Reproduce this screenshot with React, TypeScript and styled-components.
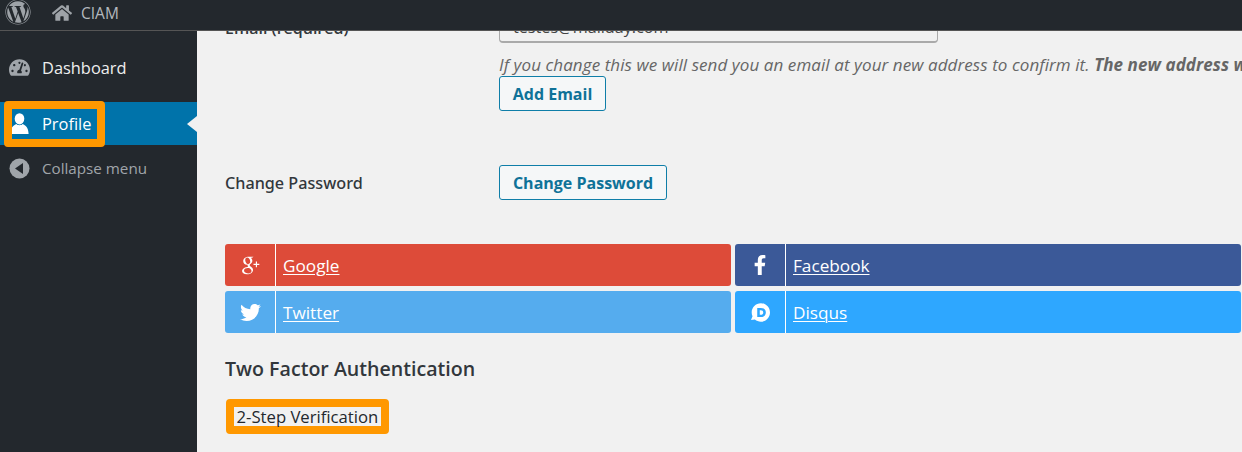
import * as React from 'react';
import styled, { createGlobalStyle } from 'styled-components';
import { FaFacebookF, FaHome, FaTachometerAlt, FaTwitter, FaWordpress } from 'react-icons/fa';
import { TiSocialGooglePlus } from 'react-icons/ti';
import { SiDisqus } from 'react-icons/si';

const GlobalStyle = createGlobalStyle`
  html, body {
    margin: 0;
    padding: 0;
    width: 1242px;
    height: 452px;
    overflow: hidden;
    background: #f1f1f1;
    font-family: "Open Sans", "Noto Sans", "Liberation Sans", sans-serif;
  }
`;

const Page = styled.div`
  position: relative;
  display: grid;
  grid-template-columns: 197px 1fr;
  width: 1242px;
  height: 452px;
  overflow: hidden;
`;

const TopBar = styled.div`
  position: absolute;
  top: 0;
  left: 0;
  right: 0;
  height: 31px;
  background: #23282d;
  border-bottom: 1px solid #555;
  box-sizing: border-box;
  display: flex;
  align-items: flex-start;
  color: #a0a5aa;
  z-index: 2;
`;

const LogoSlot = styled.span`
  display: flex;
  font-size: 26px;
  margin: -1px 0 0 5px;
  color: #9ea3a8;
`;

const HomeSlot = styled.span`
  display: flex;
  font-size: 20px;
  margin: 3px 0 0 21px;
  color: #9ea3a8;
`;

const SiteName = styled.span`
  font-size: 15.5px;
  line-height: 27px;
  margin-left: 9px;
  color: #b4b9be;
`;

const Sidebar = styled.nav`
  background: #23282d;
  padding-top: 46px;
  display: flex;
  flex-direction: column;
`;

const MenuItem = styled.div<{ $active?: boolean }>`
  position: relative;
  display: flex;
  align-items: center;
  height: 43px;
  padding-left: 9px;
  gap: 12px;
  font-size: 16.4px;
  color: ${(p) => (p.$active ? '#fff' : '#eee')};
  background: ${(p) => (p.$active ? '#0073aa' : 'transparent')};
  margin-bottom: ${(p) => (p.$active ? '0' : '13px')};
`;

const MenuIcon = styled.span<{ $color: string }>`
  display: flex;
  justify-content: center;
  width: 21px;
  font-size: 21px;
  color: ${(p) => p.$color};
`;

const ActiveArrow = styled.span`
  position: absolute;
  right: 0;
  top: 14px;
  border: 8px solid transparent;
  border-left-width: 0;
  border-right: 10px solid #f1f1f1;
`;

const Highlight = styled.span`
  position: absolute;
  left: 4px;
  top: -1px;
  width: 101px;
  height: 46px;
  box-sizing: border-box;
  border: 8px solid #ff9800;
  border-radius: 4px;
`;

const CollapseRow = styled.div`
  display: flex;
  align-items: center;
  height: 46px;
  padding-left: 9px;
  gap: 12px;
  font-size: 15.2px;
  color: #a0a5aa;
`;

const Main = styled.main`
  padding: 0 0 0 28px;
  min-width: 0;
  overflow: hidden;
  color: #32373c;
`;

const FieldRow = styled.div`
  display: grid;
  grid-template-columns: 274px 1fr;
  align-items: start;
`;

const EmailRow = styled(FieldRow)`
  height: 111px;
`;

const FieldLabel = styled.label`
  font-size: 16px;
  font-weight: 600;
  line-height: 22px;
`;

const EmailLabel = styled(FieldLabel)`
  padding-top: 17px;
`;

const PasswordLabel = styled(FieldLabel)`
  font-family: "Noto Sans", "Open Sans", sans-serif;
  font-size: 16.2px;
  font-weight: 500;
  color: #32373c;
  padding-top: 7px;
`;

const EmailInput = styled.div`
  width: 439px;
  height: 43px;
  box-sizing: border-box;
  border: 1px solid #aaa;
  border-bottom-width: 2px;
  border-radius: 4px;
  padding: 15px 0 0 13px;
  font-size: 16.2px;
  color: #444;
  white-space: nowrap;
`;

const Hint = styled.p`
  margin: 10px 0 0;
  font-size: 17px;
  line-height: 23px;
  font-style: italic;
  color: #666;
  white-space: nowrap;
  letter-spacing: 0.08px;
`;

const OutlineButton = styled.button<{ $width: number }>`
  display: block;
  width: ${(p) => p.$width}px;
  height: 35px;
  padding: 0;
  box-sizing: border-box;
  border: 1px solid #0f7ea8;
  border-radius: 3px;
  background: #f5f7f8;
  color: #0f7298;
  font-family: inherit;
  font-size: 16px;
  font-weight: 700;
`;

const PasswordRow = styled(FieldRow)`
  margin-top: 54px;
`;

const SocialGrid = styled.div`
  display: grid;
  grid-template-columns: 506px 506px;
  grid-template-rows: 42px 42px;
  column-gap: 4px;
  row-gap: 5px;
  margin-top: 44px;
`;

const SocialButton = styled.a<{ $bg: string }>`
  display: flex;
  align-items: center;
  background: ${(p) => p.$bg};
  border-radius: 3px;
  color: #fff;
  font-size: 17.2px;
  text-decoration: underline;
  text-underline-offset: 2px;
  text-decoration-thickness: 1px;
`;

const SocialIcon = styled.span<{ $size: number }>`
  display: flex;
  align-items: center;
  justify-content: center;
  width: 50px;
  height: 100%;
  margin-right: 7px;
  border-right: 1px solid #fff;
  font-size: ${(p) => p.$size}px;
`;

const SectionTitle = styled.h2`
  margin: 22px 0 0;
  font-size: 19.6px;
  line-height: 28px;
  font-weight: 600;
  color: #32373c;
`;

const StepLink = styled.span`
  display: inline-block;
  margin: 16px 0 0 1px;
  padding: 0 2.5px;
  border: 8px solid #ff9800;
  border-radius: 4px;
  font-size: 16.7px;
  line-height: 19px;
  color: #23282d;
  background: #f1f1f1;
`;

const socials = [
  { name: 'Google', bg: '#dd4b39', size: 28, icon: <TiSocialGooglePlus /> },
  { name: 'Facebook', bg: '#3b5998', size: 20, icon: <FaFacebookF /> },
  { name: 'Twitter', bg: '#55acee', size: 21, icon: <FaTwitter /> },
  { name: 'Disqus', bg: '#2ea7ff', size: 19, icon: <SiDisqus /> }
];

const CollapseIcon = () => (
  <svg width="21" height="21" viewBox="0 0 21 21">
    <circle cx="10.5" cy="10.5" r="10" fill="#a0a5aa" />
    <path d="M14 5 L6 10.5 L14 16 Z" fill="#23282d" />
  </svg>
);

const UserIcon = () => (
  <svg width="19" height="22" viewBox="0 0 19 22" fill="#fff">
    <ellipse cx="9.5" cy="5.8" rx="4.8" ry="5.6" />
    <path d="M6.4 11 C7.6 12.6 11.4 12.6 12.6 11 C15.5 12.2 18.4 14.4 18.6 21 L0.4 21 C0.6 14.4 3.5 12.2 6.4 11 Z" />
  </svg>
);

export default function App() {
  return (
    <Page>
      <GlobalStyle />
      <TopBar>
        <LogoSlot>
          <FaWordpress />
        </LogoSlot>
        <HomeSlot>
          <FaHome />
        </HomeSlot>
        <SiteName>CIAM</SiteName>
      </TopBar>
      <Sidebar>
        <MenuItem>
          <MenuIcon $color="#a0a5aa">
            <FaTachometerAlt />
          </MenuIcon>
          Dashboard
        </MenuItem>
        <MenuItem $active>
          <MenuIcon $color="#fff">
            <UserIcon />
          </MenuIcon>
          Profile
          <ActiveArrow />
          <Highlight />
        </MenuItem>
        <CollapseRow>
          <CollapseIcon />
          Collapse menu
        </CollapseRow>
      </Sidebar>
      <Main>
        <EmailRow>
          <EmailLabel>Email (required)</EmailLabel>
          <div>
            <EmailInput>testes@mailday.com</EmailInput>
            <Hint>
              If you change this we will send you an email at your new address to confirm it. <b>The new address will not become active until confirmed.</b>
            </Hint>
            <OutlineButton $width={107}>Add Email</OutlineButton>
          </div>
        </EmailRow>
        <PasswordRow>
          <PasswordLabel>Change Password</PasswordLabel>
          <OutlineButton $width={168}>Change Password</OutlineButton>
        </PasswordRow>
        <SocialGrid>
          {socials.map((s) => (
            <SocialButton key={s.name} $bg={s.bg}>
              <SocialIcon $size={s.size}>{s.icon}</SocialIcon>
              {s.name}
            </SocialButton>
          ))}
        </SocialGrid>
        <SectionTitle>Two Factor Authentication</SectionTitle>
        <StepLink>2-Step Verification</StepLink>
      </Main>
    </Page>
  );
}
